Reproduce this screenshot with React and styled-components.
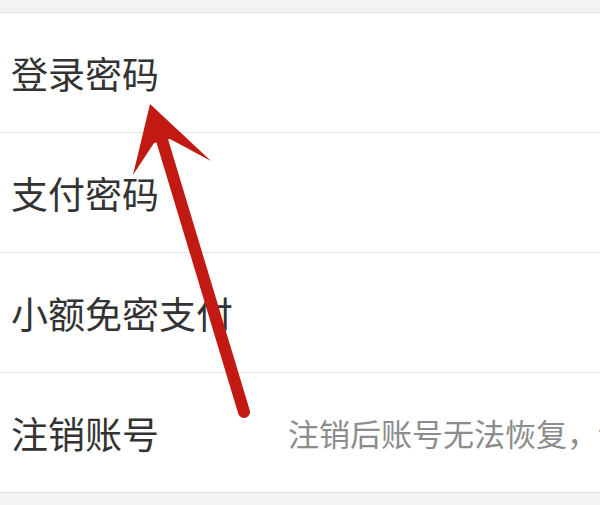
import React from "react";
import styled, { createGlobalStyle } from "styled-components";

const GlobalStyle = createGlobalStyle`
  html, body {
    margin: 0;
    padding: 0;
    background: #f3f3f3;
  }
  body {
    font-family: "Noto Sans CJK SC", "Noto Sans", sans-serif;
  }
`;

const Page = styled.div`
  position: relative;
  width: 600px;
  height: 505px;
  overflow: hidden;
  padding-top: 12px;
  box-sizing: border-box;
`;

const List = styled.div`
  background: #fff;
  border-top: 1px solid #e2e2e2;
  border-bottom: 1px solid #e2e2e2;
`;

const Row = styled.div`
  display: flex;
  align-items: center;
  height: 119px;
  padding-left: 11px;
  overflow: hidden;
  & + & {
    border-top: 1px solid #e2e2e2;
  }
`;

const Label = styled.span`
  flex: 0 0 277px;
  font-size: 37px;
  color: #333;
  white-space: nowrap;
`;

const Hint = styled.span`
  flex: 1;
  min-width: 0;
  font-size: 31px;
  color: #8c8c8c;
  white-space: nowrap;
  overflow: hidden;
`;

const Overlay = styled.svg`
  position: absolute;
  left: 0;
  top: 0;
  pointer-events: none;
`;

const rows = [
  { label: "登录密码" },
  { label: "支付密码" },
  { label: "小额免密支付" },
  { label: "注销账号", hint: "注销后账号无法恢复，请谨慎操作" },
];

export default function App() {
  return (
    <>
      <GlobalStyle />
      <Page>
        <List>
          {rows.map((r) => (
            <Row key={r.label}>
              <Label>{r.label}</Label>
              {r.hint && <Hint>{r.hint}</Hint>}
            </Row>
          ))}
        </List>
        <Overlay width="600" height="505" viewBox="0 0 600 505">
          <line
            x1="162"
            y1="140"
            x2="244"
            y2="412"
            stroke="#c21a12"
            strokeWidth="12"
            strokeLinecap="round"
          />
          <polygon
            points="150,104 211,161 170,139 154,143 133,175"
            fill="#c21a12"
          />
        </Overlay>
      </Page>
    </>
  );
}
